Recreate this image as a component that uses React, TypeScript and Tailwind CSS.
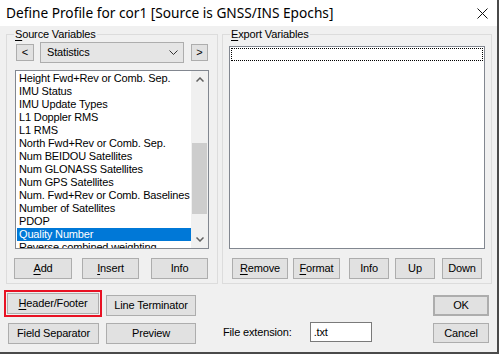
import { ReactNode } from 'react';

const items = [
  'Height Fwd+Rev or Comb. Sep.',
  'IMU Status',
  'IMU Update Types',
  'L1 Doppler RMS',
  'L1 RMS',
  'North Fwd+Rev or Comb. Sep.',
  'Num BEIDOU Satellites',
  'Num GLONASS Satellites',
  'Num GPS Satellites',
  'Num. Fwd+Rev or Comb. Baselines',
  'Number of Satellites',
  'PDOP',
  'Quality Number',
  'Reverse combined weighting',
];

function Btn({ children, className = '' }: { children: ReactNode; className?: string }) {
  return (
    <button
      className={`flex items-center justify-center bg-[#e1e1e1] border border-[#adadad] text-black leading-none ${className}`}
    >
      {children}
    </button>
  );
}

function U({ children }: { children: ReactNode }) {
  return <span className="underline underline-offset-[2px] decoration-[1px]">{children}</span>;
}

function GroupLabel({ children }: { children: ReactNode }) {
  return (
    <div className="-mt-[7px] ml-[7px] h-[13px] leading-[13px] w-fit px-[1px] bg-[#f0f0f0]">{children}</div>
  );
}

export default function App() {
  return (
    <div
      className="w-[499px] h-[354px] bg-[#f0f0f0] flex flex-col border-r-[2px] border-b-[2px] border-[#4a4a4a] overflow-hidden text-[11px] tracking-[-0.15px] text-black"
      style={{ fontFamily: '"Liberation Sans", Arial, sans-serif' }}
    >
      {/* title bar */}
      <div className="h-[26px] bg-white flex items-center shrink-0">
        <span
          className="ml-[6px] text-[13.7px] tracking-normal text-black"
          style={{ fontFamily: '"Noto Sans", "Open Sans", sans-serif' }}
        >
          Define Profile for cor1 [Source is GNSS/INS Epochs]
        </span>
        <svg className="ml-auto mr-[9px]" width="11" height="11" viewBox="0 0 11 11">
          <path d="M0.5 0.5 L10.5 10.5 M10.5 0.5 L0.5 10.5" stroke="#111" strokeWidth="1" fill="none" />
        </svg>
      </div>

      {/* group boxes */}
      <div className="flex mt-[8px] ml-[6px]">
        {/* source variables */}
        <div className="w-[212px] h-[250px] border border-[#dcdcdc] flex flex-col">
          <GroupLabel>
            <U>S</U>ource Variables
          </GroupLabel>
          <div className="mt-[1px] h-[21px] flex items-center">
            <Btn className="ml-[9px] w-[18px] h-[17px]">&lt;</Btn>
            <div className="ml-[6px] w-[144px] h-[21px] bg-[#e5e5e5] border border-[#adadad] flex items-center">
              <span className="ml-[6px]">Statistics</span>
              <svg className="ml-auto mr-[5px]" width="9" height="5" viewBox="0 0 9 5">
                <path d="M0.5 0.5 L4.5 4.5 L8.5 0.5" stroke="#333" strokeWidth="1" fill="none" />
              </svg>
            </div>
            <Btn className="ml-[7px] w-[17px] h-[17px]">&gt;</Btn>
          </div>
          <div className="mt-[7px] ml-[8px] w-[194px] h-[179px] border border-[#828790] bg-white flex overflow-hidden">
            <div className="flex-1 pt-[1px] overflow-hidden">
              {items.map((it) => (
                <div
                  key={it}
                  className={`h-[13px] leading-[13px] ml-[1px] pl-[2px] whitespace-nowrap ${
                    it === 'Quality Number' ? 'bg-[#0078d7] text-white' : ''
                  }`}
                >
                  {it}
                </div>
              ))}
            </div>
            <div className="w-[17px] bg-[#f0f0f0] flex flex-col">
              <div className="h-[17px] flex items-center justify-center">
                <svg width="8" height="5" viewBox="0 0 8 5">
                  <path d="M0.5 4.5 L4 1 L7.5 4.5" stroke="#606060" strokeWidth="1.5" fill="none" />
                </svg>
              </div>
              <div className="mt-[55px] mx-[1px] h-[71px] bg-[#cdcdcd]" />
              <div className="mt-auto h-[17px] flex items-center justify-center">
                <svg width="8" height="5" viewBox="0 0 8 5">
                  <path d="M0.5 0.5 L4 4 L7.5 0.5" stroke="#606060" strokeWidth="1.5" fill="none" />
                </svg>
              </div>
            </div>
          </div>
          <div className="mt-[9px] h-[21px] flex">
            <Btn className="ml-[7px] w-[58px] h-[21px]">
              <U>A</U>dd
            </Btn>
            <Btn className="ml-[10px] w-[57px] h-[21px]">
              <U>I</U>nsert
            </Btn>
            <Btn className="ml-[12px] w-[57px] h-[21px]">Info</Btn>
          </div>
        </div>

        {/* export variables */}
        <div className="ml-[4px] w-[270px] h-[250px] border border-[#dcdcdc] flex flex-col">
          <GroupLabel>
            <U>E</U>xport Variables
          </GroupLabel>
          <div className="mt-[5px] ml-[6px] w-[256px] h-[203px] border border-[#828790] bg-white p-[1px]">
            <div className="h-[13px] border border-dotted border-black" />
          </div>
          <div className="mt-[9px] h-[21px] flex">
            <Btn className="ml-[9px] w-[56px] h-[21px]">
              <U>R</U>emove
            </Btn>
            <Btn className="ml-[5px] w-[47px] h-[21px]">
              <U>F</U>ormat
            </Btn>
            <Btn className="ml-[9px] w-[40px] h-[21px]">Info</Btn>
            <Btn className="ml-[6px] w-[40px] h-[21px]">Up</Btn>
            <Btn className="ml-[7px] w-[40px] h-[21px]">Down</Btn>
          </div>
        </div>
      </div>

      {/* bottom controls */}
      <div className="flex mt-[6px]">
        <div className="ml-[4px] flex flex-col">
          <div className="w-[98px] h-[27px] border-2 border-[#e81123] flex items-center pl-[1px]">
            <Btn className="w-[92px] h-[21px]">
              <U>H</U>eader/Footer
            </Btn>
          </div>
          <Btn className="mt-[6px] ml-[4px] w-[91px] h-[21px]">Field Separator</Btn>
        </div>
        <div className="ml-[4px] flex flex-col">
          <Btn className="mt-[5px] w-[90px] h-[21px]">Line Terminator</Btn>
          <Btn className="mt-[7px] w-[90px] h-[21px]">Preview</Btn>
        </div>
        <div className="flex-1 flex items-end">
          <div className="ml-[27px] mb-[2px] flex items-center">
            <span>File extension:</span>
            <div className="ml-[18px] w-[62px] h-[20px] bg-white border border-[#7a7a7a] flex items-center pl-[3px]">
              .txt
            </div>
          </div>
        </div>
        <div className="mr-[8px] flex flex-col">
          <Btn className="mt-[5px] w-[56px] h-[21px] border-2 border-[#0078d7]">OK</Btn>
          <Btn className="mt-[7px] w-[56px] h-[20px]">Cancel</Btn>
        </div>
      </div>
    </div>
  );
}
